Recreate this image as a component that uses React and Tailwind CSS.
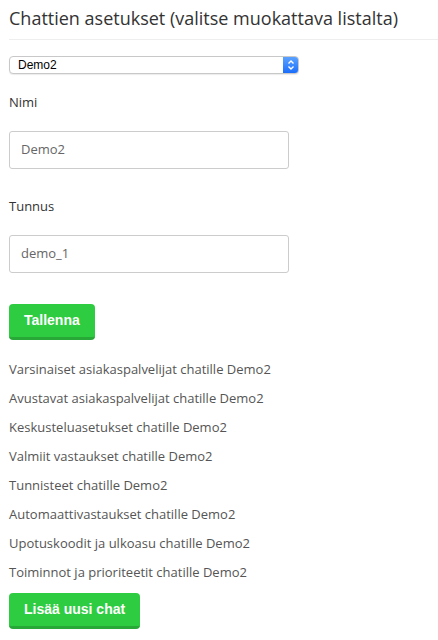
const LINKS = [
  "Varsinaiset asiakaspalvelijat chatille Demo2",
  "Avustavat asiakaspalvelijat chatille Demo2",
  "Keskusteluasetukset chatille Demo2",
  "Valmiit vastaukset chatille Demo2",
  "Tunnisteet chatille Demo2",
  "Automaattivastaukset chatille Demo2",
  "Upotuskoodit ja ulkoasu chatille Demo2",
  "Toiminnot ja prioriteetit chatille Demo2",
];

const GreenButton = ({ children }) => (
  <button
    type="button"
    className="h-[36px] px-[15px] rounded-[4px] bg-[#2ecc40] border-b-[3px] border-[#27a837] text-white text-[14px] font-bold font-['Liberation_Sans',Arial,sans-serif]"
  >
    {children}
  </button>
);

export default function App() {
  return (
    <div className="w-[438px] min-h-[640px] bg-white pl-[9px] font-['Open_Sans',sans-serif] text-[#555]">
      <h1 className="pt-[5px] text-[18px] leading-[26px] text-[#333] whitespace-nowrap">
        Chattien asetukset (valitse muokattava listalta)
      </h1>
      <div className="mt-[8px] border-t border-[#eee]" />

      <div className="mt-[16px] w-[290px] h-[18px] flex items-stretch rounded-[4px] border border-[#c8c8c8] bg-white overflow-hidden shadow-[0_1px_1px_rgba(0,0,0,0.08)]">
        <span className="flex-1 pl-[8px] text-[12px] leading-[16px] text-black font-['Liberation_Sans',Arial,sans-serif]">
          Demo2
        </span>
        <span className="w-[15px] bg-gradient-to-b from-[#5aa2ff] to-[#1a6dfb] flex items-center justify-center">
          <svg width="8" height="12" viewBox="0 0 8 12" fill="none" stroke="white" strokeWidth="1.4">
            <path d="M1.5 4.5 L4 2 L6.5 4.5" />
            <path d="M1.5 7.5 L4 10 L6.5 7.5" />
          </svg>
        </span>
      </div>

      <div className="mt-[19px] text-[13px] leading-[18px] text-[#333]">Nimi</div>
      <div className="mt-[20px] w-[280px] h-[38px] rounded-[3px] border border-[#ccc] flex items-center px-[11px] text-[13px] text-[#666]">
        Demo2
      </div>

      <div className="mt-[28px] text-[13px] leading-[18px] text-[#333]">Tunnus</div>
      <div className="mt-[20px] w-[280px] h-[38px] rounded-[3px] border border-[#ccc] flex items-center px-[11px] text-[13px] text-[#666]">
        demo_1
      </div>

      <div className="mt-[31px]">
        <GreenButton>Tallenna</GreenButton>
      </div>

      <div className="mt-[19px] flex flex-col">
        {LINKS.map((label) => (
          <div key={label} className="h-[29px] text-[13px] leading-[20px] text-[#555]">
            {label}
          </div>
        ))}
      </div>

      <div className="mt-[2px]">
        <GreenButton>Lisää uusi chat</GreenButton>
      </div>
    </div>
  );
}
